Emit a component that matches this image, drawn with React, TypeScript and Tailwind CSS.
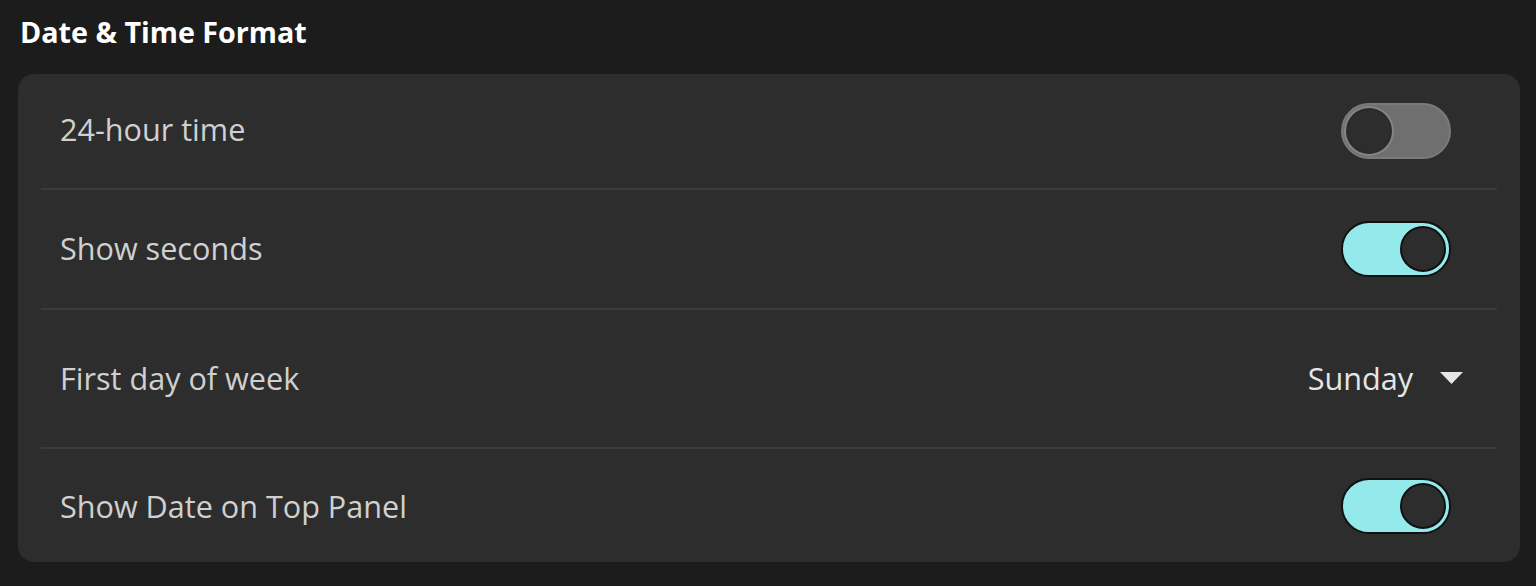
import { useState } from 'react'

const FONT = "font-['Open_Sans',_'Noto_Sans',_sans-serif]"

function Toggle({ on, onChange }: { on: boolean; onChange: () => void }) {
  return (
    <button
      onClick={onChange}
      className={`relative flex items-center w-[110px] h-[56px] rounded-full border-2 transition-colors ${
        on ? 'bg-[#94e9eb] border-[#111]' : 'bg-[#6f6f6f] border-[#7a7a7a]'
      }`}
    >
      <span
        className={`absolute top-[3px] w-[46px] h-[46px] rounded-full bg-[#2d2d2d] border-2 transition-all ${
          on ? 'left-[57px] border-[#111]' : 'left-[3px] border-[#2b2b2b] shadow-[0_0_0_2px_#858585]'
        }`}
      />
    </button>
  )
}

export default function App() {
  const [h24, setH24] = useState(false)
  const [seconds, setSeconds] = useState(true)
  const [showDate, setShowDate] = useState(true)

  return (
    <div className={`w-[1536px] h-[586px] bg-[#1c1c1c] ${FONT} antialiased`}>
      <div className="pt-[13px] pl-[20px] h-[74px]">
        <h2 className="text-[28.7px] leading-[38px] font-bold text-white">Date &amp; Time Format</h2>
      </div>

      <div className="ml-[18px] w-[1502px] rounded-[16px] bg-[#2d2d2d] px-[23px]">
        <div className="h-[114px] flex items-center justify-between pl-[19px] pr-[46px]">
          <span className="text-[30.6px] leading-[40px] font-medium text-[#d0d0d0] -mt-[4px]">24-hour time</span>
          <Toggle on={h24} onChange={() => setH24(!h24)} />
        </div>
        <div className="h-[2px] bg-[#3b3b3b]" />
        <div className="h-[118px] flex items-center justify-between pl-[19px] pr-[46px]">
          <span className="text-[30.6px] leading-[40px] font-medium text-[#d0d0d0] -mt-[3px]">Show seconds</span>
          <Toggle on={seconds} onChange={() => setSeconds(!seconds)} />
        </div>
        <div className="h-[2px] bg-[#3b3b3b]" />
        <div className="h-[137px] flex items-center justify-between pl-[19px] pr-[34px]">
          <span className="text-[30.6px] leading-[40px] font-medium text-[#d0d0d0] -mt-[2px]">First day of week</span>
          <button className="flex items-center gap-[27px] text-[30.6px] leading-[40px] font-medium text-[#e6e6e6] -mt-[2px]">
            Sunday
            <svg width="23" height="12" viewBox="0 0 23 12">
              <path d="M0 0 L23 0 L11.5 12 Z" fill="#e6e6e6" />
            </svg>
          </button>
        </div>
        <div className="h-[2px] bg-[#3b3b3b]" />
        <div className="h-[113px] flex items-center justify-between pl-[19px] pr-[46px]">
          <span className="text-[30.6px] leading-[40px] font-medium text-[#d0d0d0]">Show Date on Top Panel</span>
          <Toggle on={showDate} onChange={() => setShowDate(!showDate)} />
        </div>
      </div>
    </div>
  )
}
